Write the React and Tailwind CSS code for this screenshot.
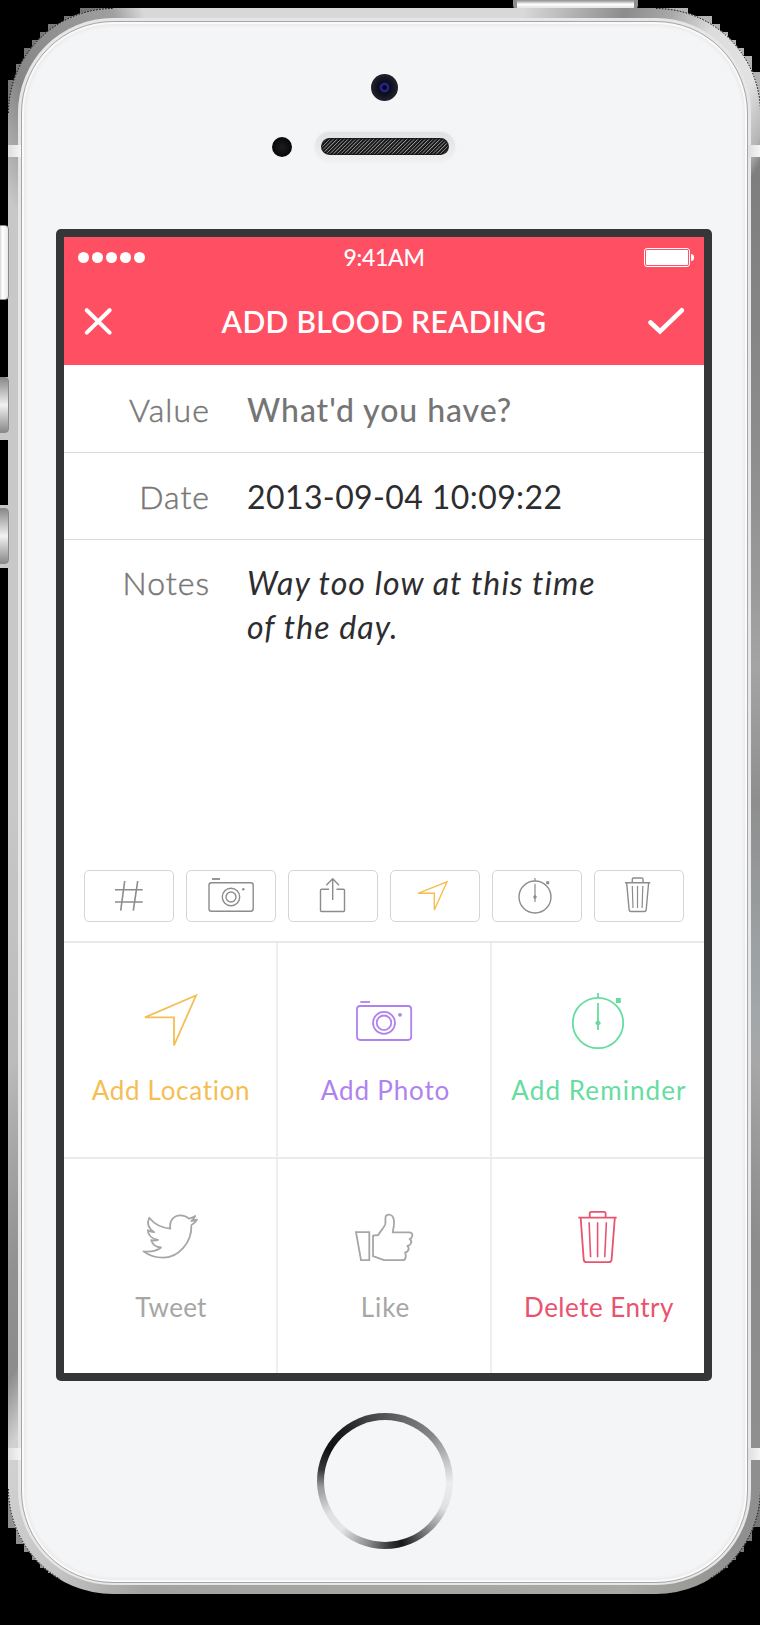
const outline = { fill: "none", stroke: "currentColor", strokeLinejoin: "round" };

/* ---- toolbar icons, drawn on the 90x52 button ---- */

function ToolIcon({ children }) {
  return (
    <svg className="block h-[50px] w-[88px]" viewBox="1 1 88 50" {...outline} strokeWidth="1.4">
      {children}
    </svg>
  );
}

const tools = [
  {
    name: "hashtag",
    color: "text-[#8c8c8c]",
    art: <path d="M40.7 11 36.7 40.7M53.7 11 49.3 40.7M31 19.8H58.7M31 32H58.7" strokeWidth="1.6" />,
  },
  {
    name: "camera",
    color: "text-[#8c8c8c]",
    art: (
      <>
        <rect x="23" y="12.8" width="44.2" height="28.4" rx="2.5" />
        <circle cx="45" cy="27" r="8.7" />
        <circle cx="45" cy="27" r="5" />
        <circle cx="57.3" cy="19.3" r="1.2" fill="currentColor" stroke="none" />
        <path d="M26 9H34" strokeWidth="1.8" />
      </>
    ),
  },
  {
    name: "share",
    color: "text-[#8c8c8c]",
    art: (
      <>
        <path d="M41 19.3H33.5Q32.5 19.3 32.5 20.3V40.5Q32.5 41.5 33.5 41.5H55.5Q56.5 41.5 56.5 40.5V20.3Q56.5 19.3 55.5 19.3H48.5" />
        <path d="M44.7 9V30M38.3 15.3 44.7 8.7 51 15.3" />
      </>
    ),
  },
  {
    name: "location",
    color: "text-[#f6bd52]",
    art: <path d="M28 23.3 57 11.8 44.3 40 44.3 23.3Z" strokeLinejoin="miter" />,
  },
  {
    name: "timer",
    color: "text-[#8c8c8c]",
    art: (
      <>
        <circle cx="43" cy="27" r="16" />
        <path d="M43 13.7V32M43 8V11" strokeWidth="1.2" />
        <path d="M43 24.8 45 27 43 29.2 41 27Z" fill="currentColor" stroke="none" />
        <path d="M54.2 11.2h3v3h-3Z" fill="currentColor" stroke="none" />
      </>
    ),
  },
  {
    name: "trash",
    color: "text-[#8c8c8c]",
    art: (
      <>
        <path d="M31 12.8H56.3M38.3 12.5V9.3Q38.3 8 39.6 8H47.7Q49 8 49 9.3V12.5" />
        <path d="M32.7 13 35.1 39.8Q35.3 41.5 37 41.5H50.3Q52 41.5 52.2 39.8L54.6 13" />
        <path d="M38.3 16 39 38M43.5 16V38M48.8 16 48.1 38" strokeWidth="1.2" />
      </>
    ),
  },
];

/* ---- action grid ---- */

const actions = [
  {
    label: "Add Location",
    color: "text-[#f5be55]",
    text: "tracking-[0.7px] pl-0.5",
    art: <path d="M7 24.3 58 2.5 36 52.5 36 24.3Z" strokeLinejoin="miter" />,
  },
  {
    label: "Add Photo",
    color: "text-[#af82f0]",
    text: "tracking-[0.85px] pl-[3px]",
    art: (
      <>
        <rect x="5" y="13" width="54.2" height="34" rx="3.2" />
        <circle cx="32" cy="29.8" r="11" />
        <circle cx="32" cy="29.8" r="7.3" />
        <circle cx="48" cy="21.8" r="1.9" fill="currentColor" stroke="none" />
        <path d="M8.3 9H18" />
      </>
    ),
  },
  {
    label: "Add Reminder",
    color: "text-[#67dca0]",
    text: "tracking-[1.1px] pl-0.5",
    art: (
      <>
        <circle cx="32" cy="30" r="25.2" />
        <path d="M32 10V37M32 0V4.7" />
        <path d="M32 26.5 35 30 32 33.5 29 30Z" fill="currentColor" stroke="none" />
        <path d="M50 5h4.8v5H50Z" fill="currentColor" stroke="none" />
      </>
    ),
  },
  {
    label: "Tweet",
    color: "text-[#a6a6a6]",
    text: "tracking-[0.3px] pl-0.5",
    art: (
      <path d="M5.5 41.4C13 42.2 18.5 41 23 37.5C18 37.2 14.5 34.2 13.2 30.2C15.5 30.8 18 30.7 20 30C14 28.8 10 25 9.8 20.2C12 21.5 14 22.1 16.2 22.2C10 18 8.8 12.8 11.2 7.8C16.5 14.3 23.5 18 32.3 18.6C31 10.5 36 5.3 42.5 5.3C46 5.3 48.8 6.6 51 8.6C53.3 8.1 55.3 7.2 57.2 6C56.6 8 55.3 9.8 53.4 11C55.3 10.8 57.2 10.4 59 9.7C57.6 11.9 55.4 13.6 53.4 15.1C54 33 40 47.7 25 47.7C18 47.7 11 45.6 5.5 41.4Z" />
    ),
  },
  {
    label: "Like",
    color: "text-[#a6a6a6]",
    text: "tracking-[0.9px] pl-[3px]",
    art: (
      <>
        <path d="M4 22.2H17.3V50.2H9Z" strokeLinejoin="miter" />
        <path d="M21 25.6 26.3 25C28 21.5 31.5 18.5 33.2 14.5C34 11.5 32.6 8 34 5.8C36.4 3.6 40 4.6 41.2 7.6C43.3 12.6 41.4 17.6 40.7 22.4H57C59.6 22.4 60.6 24 60.3 25.8C60 27.6 59.3 28.5 57.6 29C59.4 30.2 59.7 32 58.8 33.6C58.2 34.8 57 35.6 55.4 35.8C56.9 37.2 57 38.9 56.1 40.5C55.5 41.7 54.6 42.4 53 42.6C54.4 45 54.2 50.2 50.6 50.2H32L21 46.2Z" />
      </>
    ),
  },
  {
    label: "Delete Entry",
    color: "text-[#ea5370]",
    text: "tracking-[0.5px] pl-0.5",
    art: (
      <>
        <path d="M12.3 7.6H50.7M23.7 7.3V3.4Q23.7 1.8 25.3 1.8H38Q39.6 1.8 39.6 3.4V7.3" />
        <path d="M14.7 8 17.7 49.6Q18 52.2 20.6 52.2H42.7Q45.3 52.2 45.6 49.6L48.8 8" />
        <path d="M23.1 12.3 24.6 47.3M31.6 12.3V47.3M40.4 12.3 38.7 47.3" strokeWidth="1.6" />
      </>
    ),
  },
];

function Action({ action, top }) {
  return (
    <div className={`flex h-[214px] w-[212px] flex-col items-center ${top} ${action.color}`}>
      <svg className="block h-14 w-16 shrink-0 overflow-visible" viewBox="0 0 64 56" {...outline} strokeWidth="1.8">
        {action.art}
      </svg>
      <span className={`mt-6 whitespace-nowrap text-[26px] leading-[34px] ${action.text}`}>{action.label}</span>
    </div>
  );
}

function ActionRow({ items, top }) {
  return (
    <div className="flex">
      {items.map((a, i) => (
        <div key={a.label} className={i === 0 ? "w-[212px]" : "w-[214px] border-l-2 border-[#eeeeee]"}>
          <Action action={a} top={top} />
        </div>
      ))}
    </div>
  );
}

function Label({ children, className }) {
  return (
    <span
      className={`w-[146px] shrink-0 text-right text-[32px] font-light text-[#777] [-webkit-text-stroke:0.5px_#777] ${className}`}
    >
      {children}
    </span>
  );
}

function Screen() {
  return (
    <div className="flex h-[1136px] w-[640px] flex-col bg-white">
      <header className="h-32 shrink-0 bg-[#ff4f63] text-white">
        <div className="grid h-10 grid-cols-3 items-center pl-[14px] pr-[10px]">
          <div className="flex gap-[3px]">
            {[0, 1, 2, 3, 4].map((n) => (
              <i key={n} className="size-[11px] rounded-full bg-white" />
            ))}
          </div>
          <span className="pr-1 text-center text-[23px] font-medium leading-10 tracking-[-0.3px]">9:41AM</span>
          <div className="flex items-center justify-end gap-px">
            <div className="h-[19px] w-[46px] rounded-[3px] border border-white p-px">
              <div className="h-full w-full rounded-[1px] bg-white" />
            </div>
            <i className="h-[7px] w-[3px] rounded-r-full bg-white" />
          </div>
        </div>
        <div className="flex h-[88px] items-center justify-between px-5">
          <svg className="size-7" viewBox="0 0 28 28" {...outline} strokeWidth="4" strokeLinecap="round">
            <path d="M2.8 3.2 25.6 25.6M25.6 3.2 2.8 25.6" />
          </svg>
          <h1 className="whitespace-nowrap pl-2 text-[30px] font-semibold leading-[90px] tracking-[0.3px]">ADD BLOOD READING</h1>
          <svg className="h-7 w-9" viewBox="0 0 36 28" {...outline} strokeWidth="4.6" strokeLinecap="round" strokeLinejoin="miter">
            <path d="M2.5 15.5 12 24.3 33.8 3.3" />
          </svg>
        </div>
      </header>

      <div className="flex h-[88px] shrink-0 border-b border-[#dcdcdc] leading-[89px]">
        <Label className="tracking-[1.1px]">Value</Label>
        <span className="pl-[37px] text-[32px] font-medium tracking-[0.95px] text-[#757575]">What'd you have?</span>
      </div>
      <div className="flex h-[87px] shrink-0 border-b border-[#dcdcdc] leading-[87px]">
        <Label className="tracking-[1px]">Date</Label>
        <span className="pl-[37px] text-[32px] tracking-[0.4px] text-[#2d2d2f]">2013-09-04 10:09:22</span>
      </div>
      <div className="flex h-[330px] shrink-0 pt-[21px] leading-11">
        <Label className="tracking-[1px]">Notes</Label>
        <p className="pl-[37px] text-[32px] italic tracking-[1.1px] text-[#2d2d2f]">
          Way too low at this time
          <br />
          of the day.
        </p>
      </div>

      <div className="flex h-[71px] shrink-0 gap-3 px-5">
        {tools.map((t) => (
          <button key={t.name} aria-label={t.name} className={`h-[52px] w-[90px] rounded-[5px] border border-[#d6d6d6] ${t.color}`}>
            <ToolIcon>{t.art}</ToolIcon>
          </button>
        ))}
      </div>

      <div className="divide-y-2 divide-[#ebebeb] border-t-2 border-[#e8e8e8]">
        <ActionRow items={actions.slice(0, 3)} top="pt-[50px]" />
        <ActionRow items={actions.slice(3)} top="pt-[51px]" />
      </div>
    </div>
  );
}

/* ---- device hardware ---- */

function SideButton({ className }) {
  return (
    <div className={`absolute left-[-4px] w-[13px] rounded-[4px] border border-[#8a8a8a] ${className}`} />
  );
}

function Band({ className }) {
  return <div className={`absolute h-3 w-[13px] bg-linear-to-r from-[#dedede] to-[#f6f6f6] ${className}`} />;
}

export default function App() {
  return (
    <div className="relative h-[1625px] w-[760px] overflow-hidden bg-black font-['Lato',sans-serif]">
      <svg className="absolute inset-0 h-full w-full" viewBox="0 0 760 1625">
        <path
          fill="#777"
          d="M110 8H80V16H64V24H48V32H40V40H32V48H24V64H16V80H8V113L80 80Z"
        />
        <path fill="#8f8f8f" d="M8 1480V1528H16V1544H24V1552H32V1560H40V1568H48V1573H70L100 1500Z" />
        <path fill="#777" d="M760 1480V1527H752V1541H744V1552H736V1560H728V1568H720V1573H690L660 1500Z" />
        <path
          fill="#b4b4b4"
          d="M656 8H688V16H712V24H720V32H728V40H736V48H744V56H752V72H760V110L680 80Z"
        />
      </svg>

      <div className="absolute left-[513px] top-[-3px] h-3 w-[125px] rounded-[4px] border-x-4 border-[#8f8f8f] bg-linear-to-b from-[#999] from-30% via-white via-60% to-[#ddd]" />
      <div className="absolute left-0 top-[377px] h-[63px] w-2 bg-[#c8c8c8]" />
      <div className="absolute left-0 top-[505px] h-[63px] w-2 bg-[#c8c8c8]" />

      <div className="relative ml-2 w-[753px] pt-2">
        <div className="h-[1586px] rounded-[105px] bg-[conic-gradient(#d8d8d8_0deg,#d8d8d8_10deg,#8c8c8c_17deg,#a8a8a8_20deg,#dcdcdc_23deg,#e2e2e2_27deg,#b4b4b4_29.5deg,#7e7e7e_30.5deg,#8c8c8c_45deg,#a4a4a4_70deg,#8e8e8e_90deg,#a0a6a8_118deg,#a8a8a8_125deg,#8c8c8c_140deg,#909090_155deg,#a8a8a4_163deg,#a3a3a1_197deg,#c4c4c4_203deg,#d2d2d2_210deg,#8c8c8c_213deg,#909090_218deg,#bcbcbc_235deg,#c8c8c8_270deg,#c8c8c8_328deg,#a8a8a8_330.5deg,#868686_333deg,#949494_338deg,#a0a0a0_341deg,#d8d8d8_343deg,#d8d8d8_360deg)] px-[10px] pb-[9px] pt-[10px]">
          <div className="h-full rounded-[95px] bg-[#e6e6e6] p-[3px] pb-[2px]">
            <div className="h-full rounded-[92px] border border-[#a6a6a6] bg-[#f4f5f7] shadow-[inset_0_0_0_2px_#fafafa,inset_0_0_3px_4px_#ebebec]">
              <div className="flex flex-col items-center pt-[52px]">
                <div className="flex size-[27px] items-center justify-center rounded-full bg-[radial-gradient(#15153a_0%,#0e0e20_35%,#24272c_75%)]">
                  <i className="size-[9px] rounded-full bg-[radial-gradient(#05051a_25%,#2f2fae_60%,#0c0c30_100%)]" />
                </div>
                <div className="mt-[31px] flex h-[29px] w-full items-center">
                  <i className="ml-[250px] size-5 rounded-full bg-[radial-gradient(#1c1c1f,#000)]" />
                  <div className="ml-[23px] flex h-[29px] w-[140px] items-center justify-center rounded-full bg-linear-to-b from-[#e0e2e3] to-[#f0f0ee] shadow-[0_0_3px_#e6e6e6]">
                    <div className="h-[17px] w-[128px] rounded-full bg-[#202020] bg-[repeating-linear-gradient(135deg,#1a1a1a_0px,#1a1a1a_1.2px,#9b9b9b_1.7px,#1a1a1a_2.6px)] shadow-[inset_0_0_2px_1px_#111]" />
                  </div>
                </div>
              </div>
              <div className="ml-[34px] mt-[68px] h-[1152px] w-[656px] rounded-[5px] bg-[#353638] p-2">
                <Screen />
              </div>
              <div className="mx-auto mt-8 size-[136px] rounded-full bg-[conic-gradient(#555_0deg,#858585_45deg,#c4c4c4_72deg,#ededed_92deg,#e0e0e0_115deg,#8a8a8a_138deg,#18181a_165deg,#333_175deg,#8c8c8c_195deg,#e6e6e6_222deg,#e0e0e0_240deg,#999_265deg,#38383a_280deg,#111_300deg,#1c1c1e_320deg,#444_345deg,#555_360deg)] p-[7px]">
                <div className="size-full rounded-full bg-[#f5f6f8]" />
              </div>
            </div>
          </div>
        </div>
      </div>

      {/* jagged edge of the rounded corners */}
      <svg className="absolute inset-0 h-full w-full" viewBox="0 0 760 1625" fill="none" stroke="#000" strokeDasharray="1.5 1.5">
        <path d="M8.5 113A104.500 104.500 0 0 1 113 8.500M656 8.500A104.500 104.500 0 0 1 760.500 113M8.500 1489A104.500 104.500 0 0 0 60 1579M760.500 1489A104.500 104.500 0 0 1 709 1579" />
      </svg>

      <SideButton className="top-[225px] h-[75px] bg-linear-to-r from-[#aaa] via-white to-[#e8e8e8]" />
      <SideButton className="top-[377px] h-[56px] bg-linear-to-b from-[#8a8a8a] via-[#f2f2f2] to-[#8a8a8a]" />
      <SideButton className="top-[508px] h-[56px] bg-linear-to-b from-[#8a8a8a] via-[#f2f2f2] to-[#8a8a8a]" />
      <Band className="left-2 top-[145px]" />
      <Band className="left-[748px] top-[145px]" />
      <Band className="left-2 top-[1448px]" />
      <Band className="left-[748px] top-[1448px]" />
    </div>
  );
}
